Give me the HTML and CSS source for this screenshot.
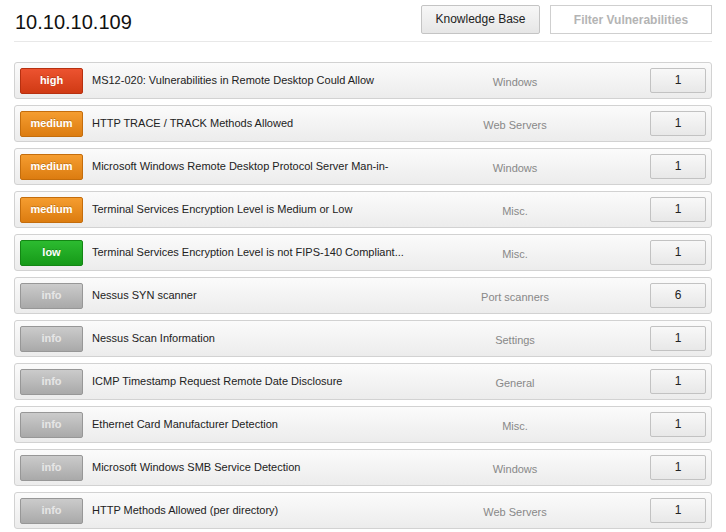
FILE: index.html
```html
<!DOCTYPE html>
<html>
<head>
<meta charset="utf-8">
<title>10.10.10.109</title>
<link rel="stylesheet" href="styles.css">
</head>
<body>

<div class="head">
  <h1 class="host">10.10.10.109</h1>
  <div class="tools">
    <span class="btn">Knowledge Base</span>
    <input class="filter" type="text" placeholder="Filter Vulnerabilities">
  </div>
</div>

<div class="vulns">
  <div class="vuln">
    <span class="sev high">high</span>
    <span class="name">MS12-020: Vulnerabilities in Remote Desktop Could Allow</span>
    <span class="family">Windows</span>
    <span class="count">1</span>
  </div>
  <div class="vuln">
    <span class="sev medium">medium</span>
    <span class="name">HTTP TRACE / TRACK Methods Allowed</span>
    <span class="family">Web Servers</span>
    <span class="count">1</span>
  </div>
  <div class="vuln">
    <span class="sev medium">medium</span>
    <span class="name">Microsoft Windows Remote Desktop Protocol Server Man-in-</span>
    <span class="family">Windows</span>
    <span class="count">1</span>
  </div>
  <div class="vuln">
    <span class="sev medium">medium</span>
    <span class="name">Terminal Services Encryption Level is Medium or Low</span>
    <span class="family">Misc.</span>
    <span class="count">1</span>
  </div>
  <div class="vuln">
    <span class="sev low">low</span>
    <span class="name">Terminal Services Encryption Level is not FIPS-140 Compliant...</span>
    <span class="family">Misc.</span>
    <span class="count">1</span>
  </div>
  <div class="vuln">
    <span class="sev info">info</span>
    <span class="name">Nessus SYN scanner</span>
    <span class="family">Port scanners</span>
    <span class="count">6</span>
  </div>
  <div class="vuln">
    <span class="sev info">info</span>
    <span class="name">Nessus Scan Information</span>
    <span class="family">Settings</span>
    <span class="count">1</span>
  </div>
  <div class="vuln">
    <span class="sev info">info</span>
    <span class="name">ICMP Timestamp Request Remote Date Disclosure</span>
    <span class="family">General</span>
    <span class="count">1</span>
  </div>
  <div class="vuln">
    <span class="sev info">info</span>
    <span class="name">Ethernet Card Manufacturer Detection</span>
    <span class="family">Misc.</span>
    <span class="count">1</span>
  </div>
  <div class="vuln">
    <span class="sev info">info</span>
    <span class="name">Microsoft Windows SMB Service Detection</span>
    <span class="family">Windows</span>
    <span class="count">1</span>
  </div>
  <div class="vuln">
    <span class="sev info">info</span>
    <span class="name">HTTP Methods Allowed (per directory)</span>
    <span class="family">Web Servers</span>
    <span class="count">1</span>
  </div>
</div>

</body>
</html>
```

FILE: styles.css
```css
* {margin:0;padding:0;box-sizing:border-box;}
body {font-family:"Liberation Sans", Arial, sans-serif;font-size:11px;color:#222;background:#fff;}

.head {display:flex;align-items:center;justify-content:space-between;margin:0 14px;padding:5px 0 7px;border-bottom:1px solid #e8e8e8;}
.host {font-size:20px;font-weight:normal;color:#111;padding:5px 0 0 1px;}
.tools {display:flex;gap:10px;}
.btn {display:block;width:119px;height:29px;line-height:27px;text-align:center;font-size:12px;color:#222;border:1px solid #c4c4c4;border-radius:2px;background:linear-gradient(#f7f7f7,#e6e6e6);}
.filter {display:block;width:162px;height:29px;border:1px solid #cfcfcf;background:#fff;font-family:"Liberation Sans", Arial, sans-serif;font-size:12px;font-weight:bold;text-align:center;outline:none;}
.filter::placeholder {color:#b4b4b4;}

.vulns {margin:20px 14px 0;display:flex;flex-direction:column;gap:6px;}
.vuln {display:flex;align-items:center;height:37px;padding:0 5px;border:1px solid #d2d2d2;border-radius:3px;background:linear-gradient(#fbfbfb,#ececec);}
.sev {width:63px;height:26px;line-height:23px;text-align:center;font-weight:bold;font-size:11px;color:#fff;border:1px solid;border-radius:2px;text-shadow:0 -1px 0 rgba(0,0,0,.2);}
.high {background:linear-gradient(#ec5330,#d03a14);border-color:#b73010;}
.medium {background:linear-gradient(#f59d30,#dc7c10);border-color:#c46d0c;}
.low {background:linear-gradient(#2cbb30,#169a18);border-color:#138614;}
.info {background:linear-gradient(#cbcbcb,#a9a9a9);border-color:#979797;color:#e6e6e6;text-shadow:none;}
.name {width:318px;margin-left:9px;padding-bottom:2px;white-space:nowrap;overflow:hidden;}
.family {width:210px;text-align:center;color:#888;padding-top:2px;}
.count {margin-left:auto;width:56px;height:25px;line-height:22px;text-align:center;font-size:12px;color:#222;border:1px solid #c2c2c2;border-radius:2px;background:linear-gradient(#f8f8f8,#e8e8e8);}
```
